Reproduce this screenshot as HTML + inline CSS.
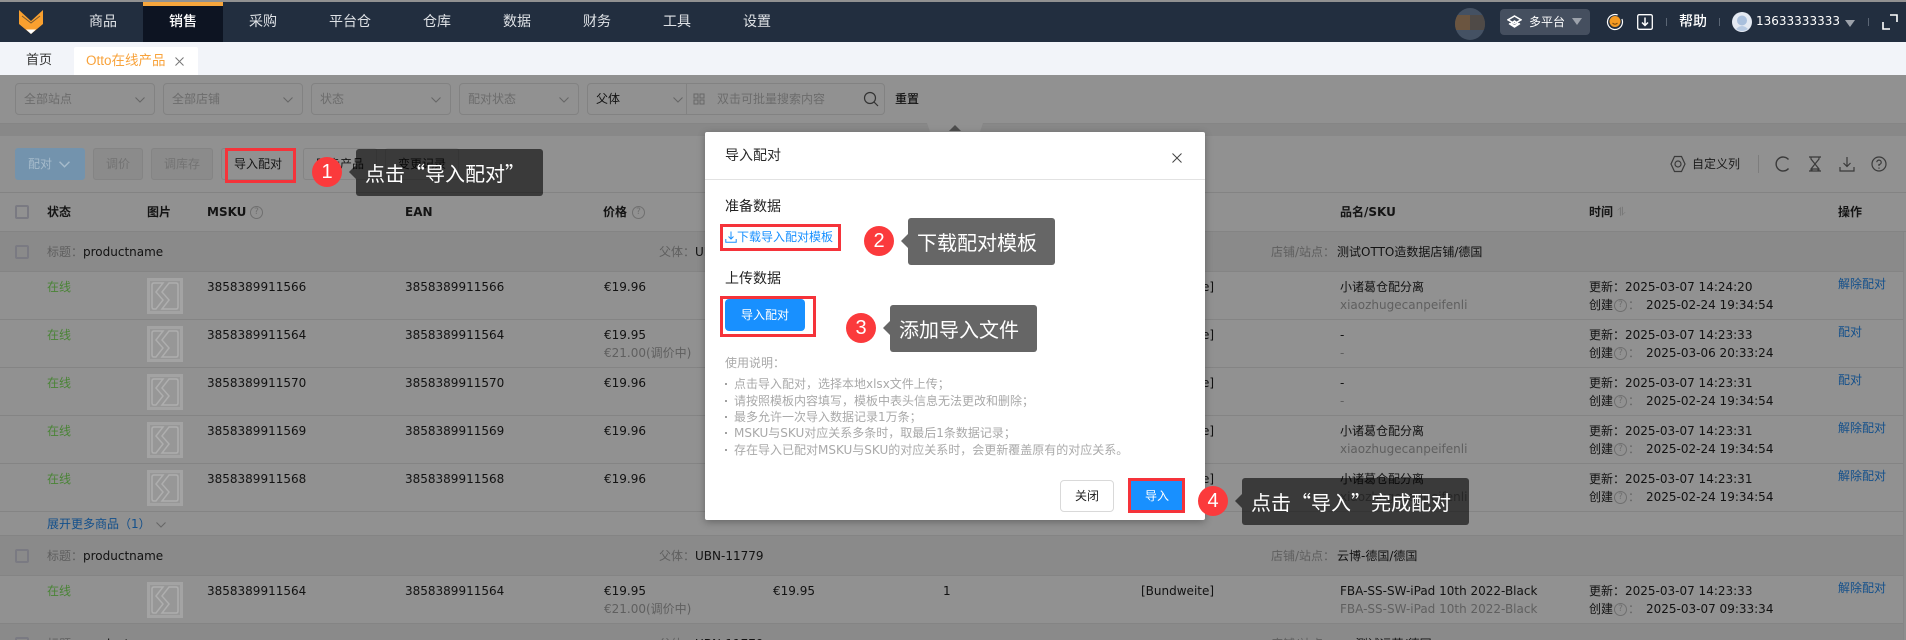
<!DOCTYPE html>
<html lang="zh-CN"><head><meta charset="utf-8"><title>导入配对</title>
<style>
*{box-sizing:border-box;margin:0;padding:0}
html,body{width:1906px;height:640px;overflow:hidden;background:#919191}
body{position:relative;font:12px/18px "DejaVu Sans","Noto Sans CJK SC",sans-serif;color:#121212}
.a{position:absolute;white-space:nowrap}
svg{display:block}
.nav{position:absolute;left:0;top:2px;width:1906px;height:40px;background:#222e3f}
.n{position:absolute;top:12px;font-size:14px;line-height:20px;color:#dfe2e6;transform:translateX(-50%);white-space:nowrap}
.tabs{position:absolute;left:0;top:42px;width:1906px;height:33px;background:#f2f4f9}
.sel{position:absolute;top:83px;height:32px;border:1px solid #828282;border-radius:4px;color:#6c6c6c;line-height:30px;padding-left:8px}
.sel svg{position:absolute;right:9px;top:11px}
.btn{position:absolute;top:148px;height:32px;border:1px solid #848484;border-radius:3px;line-height:30px;text-align:center;color:#151515}
.dis{background:#8b8b8b;color:#737373}
.row{position:absolute;left:0;width:1906px;height:48px;border-bottom:1px solid #848484}
.grp{position:absolute;left:0;width:1906px;height:40px;background:#8a8a8a;border-bottom:1px solid #848484}
.g{color:#4a8436}.m{color:#5f5f5f}.l{color:#124f8b}
.cb{position:absolute;left:15px;width:14px;height:14px;border:2px solid #7a7a82;border-radius:2px}
.h{position:absolute;top:203px;font-weight:bold;color:#141414;white-space:nowrap}
.q{position:absolute;width:13px;height:13px;border:1px solid #6f6f6f;border-radius:50%;font-size:9px;line-height:11px;text-align:center;color:#6f6f6f}
.modal{position:absolute;left:705px;top:132px;width:500px;height:388px;background:#fff;border-radius:2px;box-shadow:0 2px 8px rgba(0,0,0,.3)}
.red{position:absolute;border:3px solid #f5333a}
.tip{position:absolute;background:rgba(0,0,0,.6);border-radius:3px;height:47px;color:#fff;font:20px/47px "Noto Sans CJK SC",sans-serif;white-space:nowrap}
.tip:before{content:"";position:absolute;left:-7px;top:16px;border:7px solid transparent;border-left:0;border-right-color:rgba(0,0,0,.6)}
.num{position:absolute;width:30px;height:30px;border-radius:50%;background:#fb3a3c;color:#fff;font:20px/30px "Liberation Sans",sans-serif;text-align:center}
.help li{list-style:none;position:absolute;left:29px;white-space:nowrap;color:#a9a9a9;line-height:16px;padding-left:9px}
.help li:before{content:"";position:absolute;left:0;top:7px;width:2px;height:2px;background:#a0a0a0}
</style></head><body>
<svg width="0" height="0" style="position:absolute"><defs>
<symbol id="img" viewBox="0 0 36 36"><rect width="36" height="36" fill="#a3a3a3"/><rect x="3" y="3" width="30" height="30" fill="#979797"/><path d="M7 5H16L9 14 16 22 9 31H7Q5 31 5 29V7Q5 5 7 5ZM22 5H29Q31 5 31 7V29Q31 31 29 31H15L22 22 15 14Z" fill="none" stroke="#aeaeae" stroke-width="1.500"/></symbol>
<symbol id="chev" viewBox="0 0 10 6"><path d="M.5.5 5 5 9.500.5" fill="none" stroke="#666" stroke-width="1"/></symbol>
</defs></svg>

<div class="nav"></div>
<div class="a" style="left:143px;top:2px;width:80px;height:40px;background:#0d1422"></div>
<div class="a" style="left:143px;top:2px;width:80px;height:4px;background:#f7a63c"></div>
<svg class="a" style="left:19px;top:10px" width="24" height="24" viewBox="0 0 24 24"><path d="M0 0 L12 11 L24 0 V14 L12 24 L0 14Z" fill="#f9a02f"/><path d="M3 6 L12 13 L21 6" fill="none" stroke="#7a5a30" stroke-width="1"/><path d="M7 19.500H17L12 24Z" fill="#fff"/></svg>
<span class="n" style="left:103px">商品</span><span class="n" style="left:183px;color:#fff;font-weight:500">销售</span><span class="n" style="left:263px">采购</span><span class="n" style="left:350px">平台仓</span><span class="n" style="left:437px">仓库</span><span class="n" style="left:517px">数据</span><span class="n" style="left:597px">财务</span><span class="n" style="left:677px">工具</span><span class="n" style="left:757px">设置</span>

<div class="a" style="left:1455px;top:8px;width:30px;height:32px;border-radius:50%;overflow:hidden;background:#445163"><div class="a" style="left:0;top:7px;width:15px;height:15px;background:#6b5540"></div><div class="a" style="left:15px;top:7px;width:15px;height:15px;background:#4f4a47"></div></div>
<div class="a" style="left:1500px;top:9px;width:90px;height:26px;background:#454f5f;border-radius:4px"></div>
<svg class="a" style="left:1507px;top:14px" width="15" height="16" viewBox="0 0 15 16"><path d="M7.500 1 14 4.800 7.500 8.600 1 4.800Z M2 8.500 7.500 12 13 8.500 M7.500 6 11 8.500 7.500 11 4 8.500Z" transform="translate(0 1)" fill="none" stroke="#fff" stroke-width="1.500"/></svg>
<span class="a" style="left:1529px;top:13px;color:#fff">多平台</span>
<div class="a" style="left:1572px;top:18px;border:5px solid transparent;border-width:7px 5px 0;border-top-color:#9ca2ab"></div>
<svg class="a" style="left:1606px;top:13px" width="18" height="18" viewBox="0 0 18 18"><circle cx="9" cy="9" r="7.500" fill="none" stroke="#fff" stroke-width="1.200" stroke-dasharray="30 6" transform="rotate(60 9 9)"/><circle cx="9" cy="8.500" r="5.500" fill="#f59b23"/><path d="M6.500 10Q9 12.500 11.500 10" stroke="#7a4a10" fill="none"/></svg>
<svg class="a" style="left:1637px;top:14px" width="16" height="16" viewBox="0 0 16 16"><rect x=".7" y=".7" width="14.600" height="14.600" rx="1.500" fill="none" stroke="#fff" stroke-width="1.300"/><path d="M8 3.500V11M5 8.500 8 11.500 11 8.500" fill="none" stroke="#fff" stroke-width="1.500"/></svg>
<div class="a" style="left:1666px;top:18px;width:1px;height:8px;background:#5b6675"></div>
<span class="a" style="left:1679px;top:13px;font-size:14px;color:#fff;font-weight:500">帮助</span>
<div class="a" style="left:1719px;top:18px;width:1px;height:8px;background:#5b6675"></div>
<svg class="a" style="left:1732px;top:12px" width="20" height="20" viewBox="0 0 20 20"><circle cx="10" cy="10" r="10" fill="#e4e9f2"/><circle cx="10" cy="8.500" r="5" fill="#a9bfdc"/><path d="M4 17Q10 11 16 17 10 21 4 17Z" fill="#b8cae2"/></svg>
<span class="a" style="left:1756px;top:12px;color:#fff">13633333333</span>
<div class="a" style="left:1845px;top:20px;border:5px solid transparent;border-width:7px 5px 0;border-top-color:#9ca2ab"></div>
<div class="a" style="left:1868px;top:18px;width:1px;height:8px;background:#5b6675"></div>
<svg class="a" style="left:1882px;top:14px" width="16" height="16" viewBox="0 0 16 16"><path d="M1 8V15H8M8 1H15V8" fill="none" stroke="#fff" stroke-width="1.600"/></svg>

<div class="tabs"></div>
<span class="a" style="left:26px;top:52px;font-size:13px;color:#333">首页</span>
<div class="a" style="left:74px;top:47px;width:124px;height:28px;background:#fff;border-radius:2px 2px 0 0"></div>
<span class="a" style="left:86px;top:52px;font:13.5px/18px 'Liberation Sans','Noto Sans CJK SC',sans-serif;color:#f8a33c">Otto在线产品</span>
<svg class="a" style="left:175px;top:57px" width="9" height="9" viewBox="0 0 9 9"><path d="M.5.5 8.500 8.500M8.500.5 .5 8.500" stroke="#777" stroke-width="1"/></svg>

<div class="sel" style="left:15px;width:140px">全部站点<svg width="10" height="6" style="top:13px"><use href="#chev"/></svg></div>
<div class="sel" style="left:163px;width:140px">全部店铺<svg width="10" height="6" style="top:13px"><use href="#chev"/></svg></div>
<div class="sel" style="left:311px;width:140px">状态<svg width="10" height="6" style="top:13px"><use href="#chev"/></svg></div>
<div class="sel" style="left:459px;width:120px">配对状态<svg width="10" height="6" style="top:13px"><use href="#chev"/></svg></div>
<div class="sel" style="left:587px;width:298px;color:#121212">父体<svg width="10" height="6" style="top:13px;left:85px;right:auto"><use href="#chev"/></svg><div class="a" style="left:98px;top:0;width:1px;height:30px;background:#828282"></div><span class="a" style="left:129px;top:0;color:#6c6c6c">双击可批量搜索内容</span><svg class="a" style="left:105px;top:9px" width="12" height="12" viewBox="0 0 12 12"><path d="M1 1h4v4h-4zM7 1h4v4h-4zM1 7h4v4h-4zM7 7h4v4h-4z" fill="none" stroke="#666"/></svg><svg class="a" style="left:275px;top:7px" width="16" height="16" viewBox="0 0 16 16"><circle cx="7" cy="7" r="5.500" fill="none" stroke="#333" stroke-width="1.200"/><path d="M11 11 15 15" stroke="#333" stroke-width="1.200"/></svg></div>
<span class="a" style="left:895px;top:90px;font-weight:500">重置</span>

<div class="a" style="left:0;top:123px;width:1906px;height:13px;background:#888;border-top:1px solid #858585"></div>
<div class="a" style="left:927px;top:123px;width:56px;height:13px;background:#919191;clip-path:polygon(0 0,100% 0,92% 100%,8% 100%)"></div>
<div class="a" style="left:949px;top:125px;border:6px solid transparent;border-width:0 6px 6px;border-bottom-color:#4e4e4e"></div>

<div class="btn" style="left:15px;width:70px;background:#7393ad;border-color:#7393ad;color:#a6bbcb;text-align:left;padding-left:12px">配对<svg class="a" style="left:43px;top:12px" width="11" height="7" viewBox="0 0 10 6"><path d="M.5.5 5 5 9.500.5" fill="none" stroke="#a6bbcb" stroke-width="1.300"/></svg></div>
<div class="btn dis" style="left:93px;width:50px">调价</div>
<div class="btn dis" style="left:151px;width:62px">调库存</div>
<div class="btn" style="left:221px;width:74px">导入配对</div>
<div class="btn" style="left:303px;width:74px">同步产品</div>
<div class="btn" style="left:385px;width:74px">变更记录</div>
<svg class="a" style="left:1670px;top:155px" width="16" height="18" viewBox="0 0 16 18"><path d="M4.500 1.500H11.500L15 9 11.500 16.500H4.500L1 9Z" fill="none" stroke="#3a3a3a" stroke-width="1.200"/><circle cx="8" cy="9" r="3" fill="none" stroke="#3a3a3a" stroke-width="1.200"/></svg>
<span class="a" style="left:1692px;top:155px;color:#1c1c1c">自定义列</span>
<div class="a" style="left:1758px;top:155px;width:1px;height:18px;background:#7d7d7d"></div>
<svg class="a" style="left:1775px;top:156px" width="15" height="16" viewBox="0 0 15 16"><path d="M13.500 3.500A7 7 0 1 0 13.500 12.500" fill="none" stroke="#3a3a3a" stroke-width="1.400"/></svg>
<svg class="a" style="left:1808px;top:156px" width="14" height="16" viewBox="0 0 14 16"><path d="M1 1H13M1 15H13M3 1V3L7 8 3 13V15M11 1V3L7 8 11 13V15M4 13H10V15H4Z" fill="none" stroke="#3a3a3a" stroke-width="1.200"/></svg>
<svg class="a" style="left:1839px;top:156px" width="16" height="16" viewBox="0 0 16 16"><path d="M8 1V10M4.500 7 8 10.500 11.500 7M1 11V15H15V11" fill="none" stroke="#3a3a3a" stroke-width="1.200"/></svg>
<svg class="a" style="left:1871px;top:156px" width="16" height="16" viewBox="0 0 16 16"><circle cx="8" cy="8" r="7" fill="none" stroke="#3a3a3a" stroke-width="1.200"/><path d="M5.800 6.200A2.200 2.200 0 1 1 8 8.500V10M8 11.500V12.800" fill="none" stroke="#3a3a3a" stroke-width="1.200"/></svg>

<div class="a" style="left:0;top:192px;width:1906px;height:1px;background:#838383"></div>
<div class="a" style="left:0;top:231px;width:1906px;height:1px;background:#848484"></div>
<div class="cb" style="top:205px"></div>
<span class="h" style="left:47px">状态</span><span class="h" style="left:147px">图片</span><span class="h" style="left:207px">MSKU</span><div class="q" style="left:250px;top:206px">?</div><span class="h" style="left:405px">EAN</span><span class="h" style="left:603px">价格</span><div class="q" style="left:632px;top:206px">?</div><span class="h" style="left:1340px">品名/SKU</span><span class="h" style="left:1589px">时间</span><span class="a" style="left:1617px;top:203px;color:#777">⥮</span><span class="h" style="left:1838px">操作</span>

<!-- group 1 -->
<div class="grp" style="top:232px"><div class="cb" style="top:13px"></div><span class="a m" style="left:47px;top:11px">标题：</span><span class="a" style="left:83px;top:11px">productname</span><span class="a m" style="left:659px;top:11px">父体：</span><span class="a" style="left:695px;top:11px">UBN-11779</span><span class="a m" style="left:1271px;top:11px">店铺/站点：</span><span class="a" style="left:1337px;top:11px">测试OTTO造数据店铺/德国</span></div>

<div class="row" style="top:272px"><span class="a g" style="left:47px;top:6px">在线</span><svg class="a" style="left:147px;top:6px" width="36" height="36"><use href="#img"/></svg><span class="a" style="left:207px;top:6px">3858389911566</span><span class="a" style="left:405px;top:6px">3858389911566</span><span class="a" style="left:604px;top:6px">€19.96</span><span class="a" style="left:773px;top:6px">€19.96</span><span class="a" style="left:1141px;top:6px">[Bundweite]</span><span class="a" style="left:1340px;top:6px">小诸葛仓配分离</span><span class="a m" style="left:1340px;top:24px">xiaozhugecanpeifenli</span><span class="a" style="left:1589px;top:6px">更新：2025-03-07 14:24:20</span><span class="a" style="left:1589px;top:24px">创建</span><div class="q" style="left:1614px;top:27px">?</div><span class="a" style="left:1628px;top:24px;color:#666">：</span><span class="a" style="left:1646px;top:24px">2025-02-24 19:34:54</span><span class="a l" style="left:1838px;top:3px">解除配对</span></div>

<div class="row" style="top:320px"><span class="a g" style="left:47px;top:6px">在线</span><svg class="a" style="left:147px;top:6px" width="36" height="36"><use href="#img"/></svg><span class="a" style="left:207px;top:6px">3858389911564</span><span class="a" style="left:405px;top:6px">3858389911564</span><span class="a" style="left:604px;top:6px">€19.95</span><span class="a m" style="left:604px;top:24px">€21.00(调价中)</span><span class="a" style="left:1141px;top:6px">[Bundweite]</span><span class="a" style="left:1340px;top:6px">-</span><span class="a m" style="left:1340px;top:24px">-</span><span class="a" style="left:1589px;top:6px">更新：2025-03-07 14:23:33</span><span class="a" style="left:1589px;top:24px">创建</span><div class="q" style="left:1614px;top:27px">?</div><span class="a" style="left:1628px;top:24px;color:#666">：</span><span class="a" style="left:1646px;top:24px">2025-03-06 20:33:24</span><span class="a l" style="left:1838px;top:3px">配对</span></div>

<div class="row" style="top:368px"><span class="a g" style="left:47px;top:6px">在线</span><svg class="a" style="left:147px;top:6px" width="36" height="36"><use href="#img"/></svg><span class="a" style="left:207px;top:6px">3858389911570</span><span class="a" style="left:405px;top:6px">3858389911570</span><span class="a" style="left:604px;top:6px">€19.96</span><span class="a" style="left:1141px;top:6px">[Bundweite]</span><span class="a" style="left:1340px;top:6px">-</span><span class="a m" style="left:1340px;top:24px">-</span><span class="a" style="left:1589px;top:6px">更新：2025-03-07 14:23:31</span><span class="a" style="left:1589px;top:24px">创建</span><div class="q" style="left:1614px;top:27px">?</div><span class="a" style="left:1628px;top:24px;color:#666">：</span><span class="a" style="left:1646px;top:24px">2025-02-24 19:34:54</span><span class="a l" style="left:1838px;top:3px">配对</span></div>

<div class="row" style="top:416px"><span class="a g" style="left:47px;top:6px">在线</span><svg class="a" style="left:147px;top:6px" width="36" height="36"><use href="#img"/></svg><span class="a" style="left:207px;top:6px">3858389911569</span><span class="a" style="left:405px;top:6px">3858389911569</span><span class="a" style="left:604px;top:6px">€19.96</span><span class="a" style="left:1141px;top:6px">[Bundweite]</span><span class="a" style="left:1340px;top:6px">小诸葛仓配分离</span><span class="a m" style="left:1340px;top:24px">xiaozhugecanpeifenli</span><span class="a" style="left:1589px;top:6px">更新：2025-03-07 14:23:31</span><span class="a" style="left:1589px;top:24px">创建</span><div class="q" style="left:1614px;top:27px">?</div><span class="a" style="left:1628px;top:24px;color:#666">：</span><span class="a" style="left:1646px;top:24px">2025-02-24 19:34:54</span><span class="a l" style="left:1838px;top:3px">解除配对</span></div>

<div class="row" style="top:464px"><span class="a g" style="left:47px;top:6px">在线</span><svg class="a" style="left:147px;top:6px" width="36" height="36"><use href="#img"/></svg><span class="a" style="left:207px;top:6px">3858389911568</span><span class="a" style="left:405px;top:6px">3858389911568</span><span class="a" style="left:604px;top:6px">€19.96</span><span class="a" style="left:1141px;top:6px">[Bundweite]</span><span class="a" style="left:1340px;top:6px">小诸葛仓配分离</span><span class="a m" style="left:1340px;top:24px">xiaozhugecanpeifenli</span><span class="a" style="left:1589px;top:6px">更新：2025-03-07 14:23:31</span><span class="a" style="left:1589px;top:24px">创建</span><div class="q" style="left:1614px;top:27px">?</div><span class="a" style="left:1628px;top:24px;color:#666">：</span><span class="a" style="left:1646px;top:24px">2025-02-24 19:34:54</span><span class="a l" style="left:1838px;top:3px">解除配对</span></div>

<span class="a l" style="left:47px;top:515px">展开更多商品（1）</span>
<svg class="a" style="left:156px;top:522px" width="10" height="6"><use href="#chev"/></svg>
<div class="a" style="left:0;top:535px;width:1906px;height:1px;background:#848484"></div>

<!-- group 2 -->
<div class="grp" style="top:536px"><div class="cb" style="top:13px"></div><span class="a m" style="left:47px;top:11px">标题：</span><span class="a" style="left:83px;top:11px">productname</span><span class="a m" style="left:659px;top:11px">父体：</span><span class="a" style="left:695px;top:11px">UBN-11779</span><span class="a m" style="left:1271px;top:11px">店铺/站点：</span><span class="a" style="left:1337px;top:11px">云博-德国/德国</span></div>

<div class="row" style="top:576px"><span class="a g" style="left:47px;top:6px">在线</span><svg class="a" style="left:147px;top:6px" width="36" height="36"><use href="#img"/></svg><span class="a" style="left:207px;top:6px">3858389911564</span><span class="a" style="left:405px;top:6px">3858389911564</span><span class="a" style="left:604px;top:6px">€19.95</span><span class="a m" style="left:604px;top:24px">€21.00(调价中)</span><span class="a" style="left:773px;top:6px">€19.95</span><span class="a" style="left:943px;top:6px">1</span><span class="a" style="left:1141px;top:6px">[Bundweite]</span><span class="a" style="left:1340px;top:6px">FBA-SS-SW-iPad 10th 2022-Black</span><span class="a m" style="left:1340px;top:24px">FBA-SS-SW-iPad 10th 2022-Black</span><span class="a" style="left:1589px;top:6px">更新：2025-03-07 14:23:33</span><span class="a" style="left:1589px;top:24px">创建</span><div class="q" style="left:1614px;top:27px">?</div><span class="a" style="left:1628px;top:24px;color:#666">：</span><span class="a" style="left:1646px;top:24px">2025-03-07 09:33:34</span><span class="a l" style="left:1838px;top:3px">解除配对</span></div>

<!-- group 3 -->
<div class="grp" style="top:624px;height:16px;border:0;overflow:hidden"><div class="cb" style="top:13px"></div><span class="a m" style="left:47px;top:11px">标题：</span><span class="a" style="left:83px;top:11px">productname</span><span class="a m" style="left:659px;top:11px">父体：</span><span class="a" style="left:695px;top:11px">UBN-11779</span><span class="a m" style="left:1271px;top:11px">店铺/站点：</span><span class="a" style="left:1337px;top:11px">xx-测试运营/德国</span></div>

<div class="a" style="left:1903px;top:232px;width:3px;height:408px;background:#8e8e8e;border-left:1px solid #868686"></div>

<!-- modal -->
<div class="modal">
<span class="a" style="left:20px;top:15px;font-size:14px;color:#2a2a2a">导入配对</span>
<svg class="a" style="left:467px;top:21px" width="10" height="10" viewBox="0 0 10 10"><path d="M.5.5 9.500 9.500M9.500.5 .5 9.500" stroke="#444" stroke-width="1"/></svg>
<div class="a" style="left:0;top:47px;width:500px;height:1px;background:#e2e2e2"></div>
<span class="a" style="left:20px;top:66px;font-size:14px;color:#222">准备数据</span>
<svg class="a" style="left:20px;top:99px" width="12" height="12" viewBox="0 0 12 12"><path d="M6 .5V8M3.500 5.500 6 8 8.500 5.500M.8 8V11.300H11.200V8" fill="none" stroke="#1890ff"/></svg>
<span class="a" style="left:32px;top:96px;color:#1890ff;letter-spacing:0">下载导入配对模板</span>
<span class="a" style="left:20px;top:138px;font-size:14px;color:#222">上传数据</span>
<div class="a" style="left:20px;top:167px;width:80px;height:32px;background:#1890ff;border-radius:4px;color:#fff;text-align:center;line-height:32px;font-size:12px">导入配对</div>
<span class="a" style="left:20px;top:222px;color:#a9a9a9">使用说明：</span>
<ul class="help" style="position:absolute;left:-9px;top:0">
<li style="top:244px">点击导入配对，选择本地xlsx文件上传；</li>
<li style="top:261px">请按照模板内容填写，模板中表头信息无法更改和删除；</li>
<li style="top:277px">最多允许一次导入数据记录1万条；</li>
<li style="top:293px">MSKU与SKU对应关系多条时，取最后1条数据记录；</li>
<li style="top:310px">存在导入已配对MSKU与SKU的对应关系时，会更新覆盖原有的对应关系。</li>
</ul>
<div class="a" style="left:355px;top:348px;width:54px;height:32px;border:1px solid #d9d9d9;border-radius:4px;text-align:center;line-height:30px;color:#222;background:#fff">关闭</div>
<div class="a" style="left:425px;top:348px;width:54px;height:32px;background:#1890ff;text-align:center;line-height:32px;color:#fff">导入</div>
</div>

<!-- annotations -->
<div class="red" style="left:225px;top:148px;width:71px;height:35px"></div>
<div class="red" style="left:720px;top:224px;width:121px;height:27px"></div>
<div class="red" style="left:720px;top:296px;width:96px;height:41px"></div>
<div class="red" style="left:1128px;top:478px;width:57px;height:35px"></div>

<div class="num" style="left:312px;top:157px">1</div>
<div class="tip" style="left:356px;top:149px;width:187px;padding-left:9px">点击“导入配对”</div>
<div class="num" style="left:864px;top:226px">2</div>
<div class="tip" style="left:908px;top:218px;width:147px;padding-left:9px">下载配对模板</div>
<div class="num" style="left:846px;top:313px">3</div>
<div class="tip" style="left:890px;top:305px;width:147px;padding-left:9px">添加导入文件</div>
<div class="num" style="left:1198px;top:486px">4</div>
<div class="tip" style="left:1242px;top:478px;width:227px;padding-left:9px">点击“导入”完成配对</div>
</body></html>
